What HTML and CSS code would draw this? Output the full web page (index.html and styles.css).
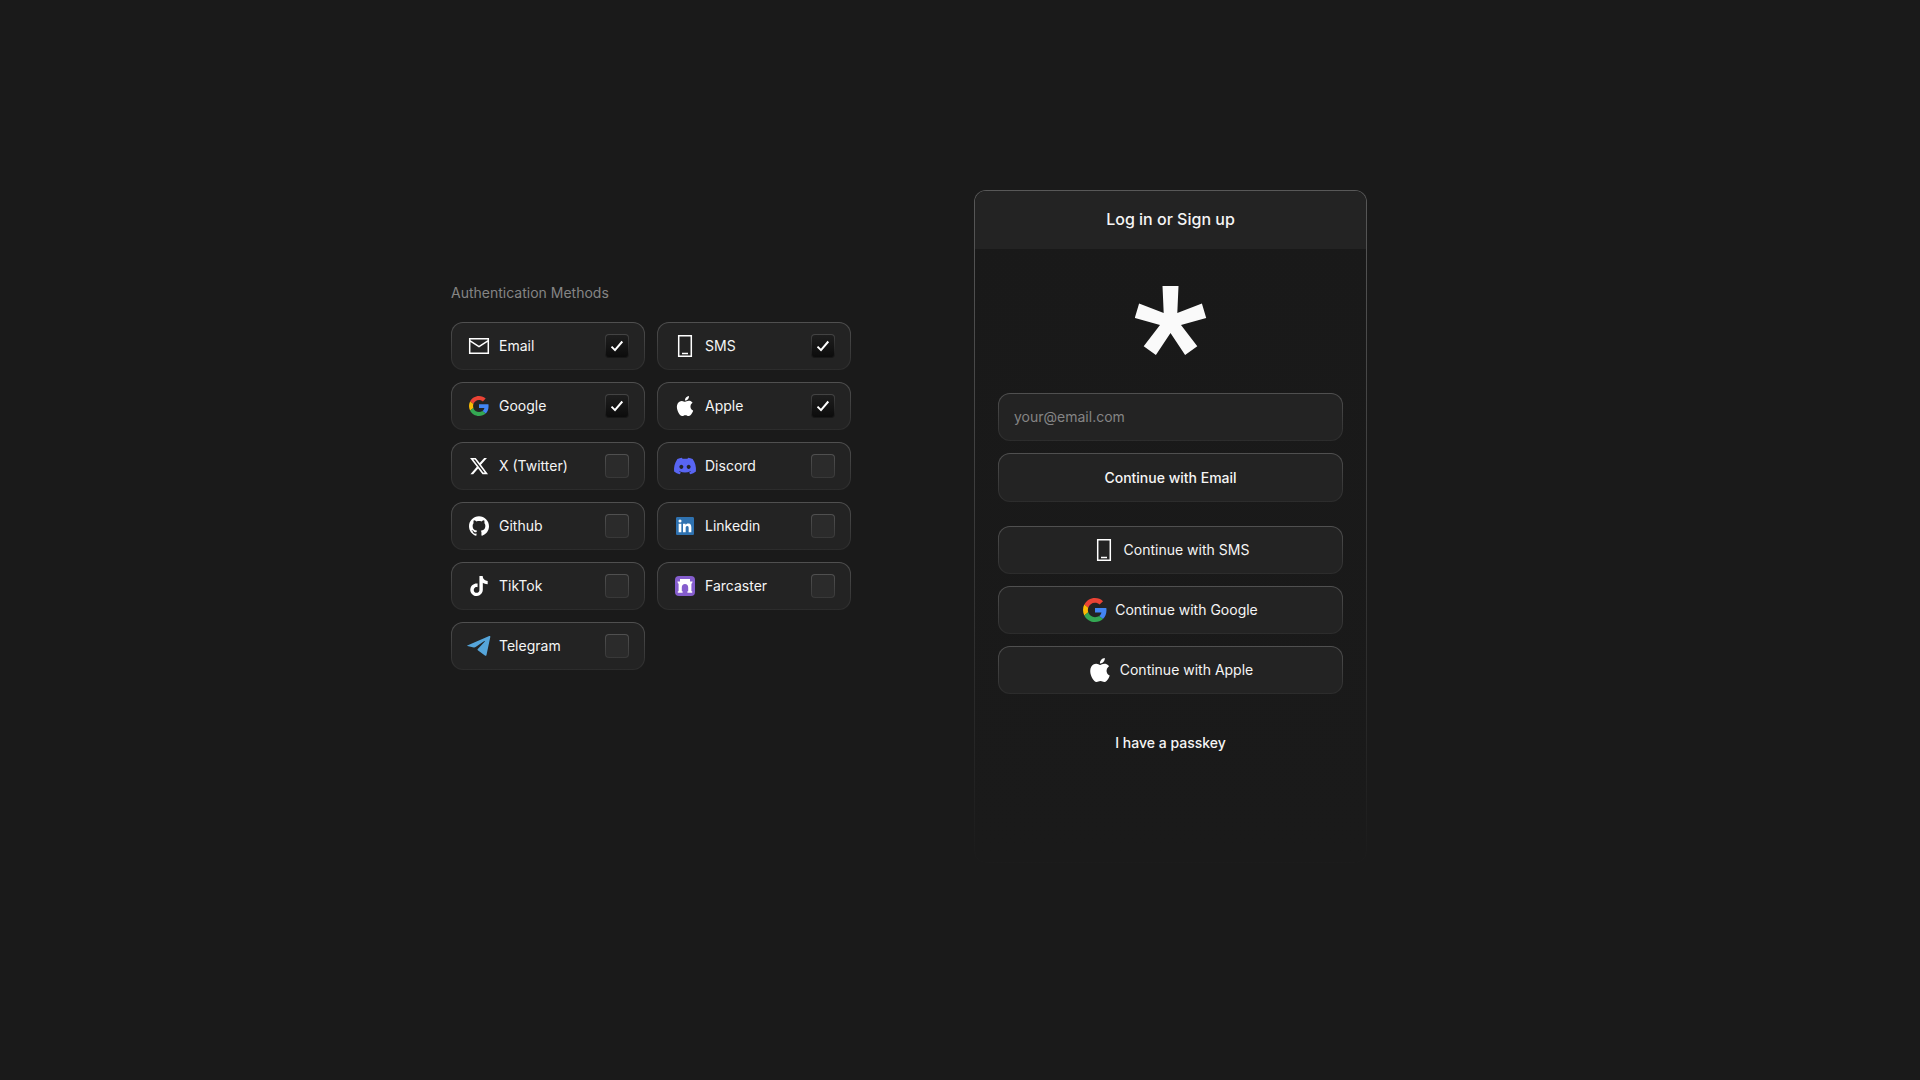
FILE: index.html
```html
<!DOCTYPE html>
<html lang="en">
<head>
    <meta charset="UTF-8">
    <meta name="viewport" content="width=device-width, initial-scale=1.0">
    <title>Log in or Sign up</title>
    <link rel="stylesheet" href="styles.css">
</head>
<body>

    <!-- Shared icons -->
    <svg class="sprite" aria-hidden="true">
        <symbol id="icon-phone" viewBox="0 0 24 24">
            <path d="M5.700 1.700h12.600v20.600H5.700z" fill="none" stroke="#fff" stroke-width="1.500"/>
            <path d="M9 19.500h6" stroke="#fff" stroke-width="1.500"/>
        </symbol>
        <symbol id="icon-google" viewBox="0 0 48 48">
            <path fill="#EA4335" d="M24 9.5c3.54 0 6.71 1.22 9.21 3.6l6.85-6.85C35.9 2.38 30.47 0 24 0 14.62 0 6.51 5.38 2.56 13.22l7.98 6.19C12.43 13.72 17.74 9.5 24 9.5z"/>
            <path fill="#4285F4" d="M46.98 24.55c0-1.57-.15-3.09-.38-4.55H24v9.02h12.94c-.58 2.96-2.26 5.48-4.78 7.18l7.73 6c4.51-4.18 7.09-10.36 7.09-17.65z"/>
            <path fill="#FBBC05" d="M10.53 28.59c-.48-1.45-.76-2.99-.76-4.59s.27-3.14.76-4.59l-7.98-6.19C.92 16.46 0 20.12 0 24c0 3.88.92 7.54 2.56 10.78l7.97-6.19z"/>
            <path fill="#34A853" d="M24 48c6.48 0 11.93-2.13 15.89-5.81l-7.73-6c-2.15 1.45-4.92 2.3-8.16 2.3-6.26 0-11.57-4.22-13.47-9.91l-7.98 6.19C6.51 42.62 14.62 48 24 48z"/>
        </symbol>
        <symbol id="icon-apple" viewBox="0 0 24 24">
            <path fill="#fff" d="M12.152 6.896c-.948 0-2.415-1.078-3.96-1.04-2.04.027-3.91 1.183-4.961 3.014-2.117 3.675-.546 9.103 1.519 12.09 1.013 1.454 2.208 3.09 3.792 3.039 1.52-.065 2.09-.987 3.935-.987 1.831 0 2.35.987 3.96.948 1.637-.026 2.676-1.48 3.676-2.948 1.156-1.688 1.636-3.325 1.662-3.415-.039-.013-3.182-1.221-3.22-4.857-.026-3.04 2.48-4.494 2.597-4.559-1.429-2.09-3.623-2.324-4.39-2.376-2-.156-3.675 1.09-4.61 1.09zM15.53 3.83c.843-1.012 1.4-2.427 1.245-3.83-1.207.052-2.662.805-3.532 1.818-.78.896-1.454 2.338-1.273 3.714 1.338.104 2.715-.688 3.559-1.701"/>
        </symbol>
    </svg>

    <main class="page">
        <section class="methods">
            <h2>Authentication Methods</h2>
            <div class="methods-grid">
                <label class="method">
                    <svg class="icon" viewBox="0 0 24 24"><path d="M2.7 4.7h18.6v14.6H2.7zM2.7 6.6 12 12.6l9.3-6" fill="none" stroke="#fff" stroke-width="1.5"/></svg>
                    <span>Email</span>
                    <input type="checkbox" checked>
                </label>
                <label class="method">
                    <svg class="icon"><use href="#icon-phone"/></svg>
                    <span>SMS</span>
                    <input type="checkbox" checked>
                </label>
                <label class="method">
                    <svg class="icon small"><use href="#icon-google"/></svg>
                    <span>Google</span>
                    <input type="checkbox" checked>
                </label>
                <label class="method">
                    <svg class="icon small"><use href="#icon-apple"/></svg>
                    <span>Apple</span>
                    <input type="checkbox" checked>
                </label>
                <label class="method">
                    <svg class="icon small" viewBox="0 0 24 24"><path fill="#fff" d="M18.244 2.25h3.308l-7.227 8.26 8.502 11.24H16.17l-5.214-6.817L4.99 21.75H1.680l7.730-8.835L1.254 2.250H8.080l4.713 6.231zm-1.161 17.520h1.833L7.084 4.126H5.117z"/></svg>
                    <span>X (Twitter)</span>
                    <input type="checkbox">
                </label>
                <label class="method">
                    <svg class="icon" viewBox="-5.8 -21.2 138.7 138.7"><path fill="#5865F2" d="M107.7 8.07A105.15 105.15 0 0 0 81.47 0a72.06 72.06 0 0 0-3.36 6.83 97.68 97.68 0 0 0-29.11 0A72.37 72.37 0 0 0 45.64 0a105.89 105.89 0 0 0-26.25 8.09C2.79 32.65-1.71 56.6.54 80.21a105.73 105.73 0 0 0 32.17 16.15 77.7 77.7 0 0 0 6.89-11.11 68.42 68.42 0 0 1-10.85-5.18c.91-.66 1.8-1.34 2.66-2a75.57 75.57 0 0 0 64.32 0c.87.71 1.76 1.39 2.66 2a68.68 68.68 0 0 1-10.87 5.19 77 77 0 0 0 6.89 11.1 105.25 105.25 0 0 0 32.19-16.14c2.64-27.38-4.51-51.11-18.9-72.15zM42.45 65.69C36.18 65.69 31 60 31 53s5-12.74 11.43-12.74S54 46 53.89 53s-5.05 12.69-11.44 12.69zm42.24 0C78.41 65.69 73.25 60 73.25 53s5-12.74 11.44-12.74S96.23 46 96.12 53s-5.04 12.69-11.43 12.69z"/></svg>
                    <span>Discord</span>
                    <input type="checkbox">
                </label>
                <label class="method">
                    <svg class="icon small" viewBox="0 0 24 24"><path fill="#fff" d="M12 .297c-6.63 0-12 5.373-12 12 0 5.303 3.438 9.8 8.205 11.385.6.113.82-.258.82-.577 0-.285-.01-1.04-.015-2.04-3.338.724-4.042-1.61-4.042-1.61C4.422 18.07 3.633 17.7 3.633 17.7c-1.087-.744.084-.729.084-.729 1.205.084 1.838 1.236 1.838 1.236 1.07 1.835 2.809 1.305 3.495.998.108-.776.417-1.305.76-1.605-2.665-.3-5.466-1.332-5.466-5.93 0-1.31.465-2.38 1.235-3.22-.135-.303-.54-1.523.105-3.176 0 0 1.005-.322 3.3 1.23.96-.267 1.98-.399 3-.405 1.02.006 2.04.138 3 .405 2.28-1.552 3.285-1.23 3.285-1.23.645 1.653.24 2.873.12 3.176.765.84 1.23 1.91 1.23 3.22 0 4.61-2.805 5.625-5.475 5.92.42.36.81 1.096.81 2.22 0 1.606-.015 2.896-.015 3.286 0 .315.21.69.825.57C20.565 22.092 24 17.592 24 12.297c0-6.627-5.373-12-12-12"/></svg>
                    <span>Github</span>
                    <input type="checkbox">
                </label>
                <label class="method">
                    <svg class="icon" viewBox="-4 -4 32 32"><path fill="#fff" d="M2 2h20v20H2z"/><path fill="#2F72B0" d="M20.447 20.452h-3.554v-5.569c0-1.328-.027-3.037-1.852-3.037-1.853 0-2.136 1.445-2.136 2.939v5.667H9.351V9h3.414v1.561h.046c.477-.9 1.637-1.85 3.37-1.85 3.601 0 4.267 2.37 4.267 5.455v6.286zM5.337 7.433a2.062 2.062 0 0 1-2.063-2.065 2.064 2.064 0 1 1 2.063 2.065zm1.782 13.019H3.555V9h3.564v11.452zM22.225 0H1.771C.792 0 0 .774 0 1.729v20.542C0 23.227.792 24 1.771 24h20.451C23.2 24 24 23.227 24 22.271V1.729C24 .774 23.2 0 22.222 0h.003z"/></svg>
                    <span>Linkedin</span>
                    <input type="checkbox">
                </label>
                <label class="method">
                    <svg class="icon small" viewBox="0 0 24 24"><path fill="#fff" d="M12.525.02c1.31-.02 2.61-.01 3.91-.02.08 1.53.63 3.09 1.75 4.17 1.12 1.11 2.7 1.62 4.24 1.79v4.03c-1.44-.05-2.89-.35-4.2-.97-.57-.26-1.1-.59-1.62-.93-.01 2.92.01 5.84-.02 8.75-.08 1.4-.54 2.79-1.35 3.94-1.31 1.92-3.58 3.17-5.91 3.21-1.43.08-2.86-.31-4.08-1.03-2.02-1.19-3.44-3.37-3.65-5.71-.02-.5-.03-1-.01-1.49.18-1.9 1.12-3.72 2.58-4.96 1.66-1.44 3.98-2.13 6.15-1.72.02 1.48-.04 2.96-.04 4.44-.99-.32-2.15-.23-3.02.37-.63.41-1.11 1.04-1.36 1.75-.21.51-.15 1.07-.14 1.61.24 1.64 1.82 3.02 3.5 2.87 1.12-.01 2.19-.66 2.77-1.61.19-.33.4-.67.41-1.06.1-1.79.06-3.57.07-5.36.01-4.03-.01-8.05.02-12.07z"/></svg>
                    <span>TikTok</span>
                    <input type="checkbox">
                </label>
                <label class="method">
                    <svg class="icon small" viewBox="0 0 20 20"><rect width="20" height="20" rx="4" fill="#855DCD"/><path fill="#fff" d="M5 3h10v2.400h2.600l-.6 2h-.6v7.800h.8v1.600H12.400v-1.600h.8v-3.600c0-2.200-1.200-3.600-3.200-3.600s-3.200 1.400-3.200 3.600v3.600h.8v1.600H2.800v-1.600h.8V7.400H3l-.6-2H5z"/></svg>
                    <span>Farcaster</span>
                    <input type="checkbox">
                </label>
                <label class="method">
                    <svg class="icon" viewBox="0 0 24 24"><path fill="#55A5DA" d="M.3 11.5 22.2 2.1c.8-.3 1.3.1 1.1 1l-3.8 17.8c-.2.9-.9 1.1-1.6.6l-7.1-5.2c-.5-.4-.5-.9 0-1.4l7-7.5c.2-.3-.1-.5-.4-.3l-8.800 6c-.6.4-1.200.5-1.900.3L.4 12.100c-.4-.1-.4-.4-.1-.6z"/></svg>
                    <span>Telegram</span>
                    <input type="checkbox">
                </label>
            </div>
        </section>

        <section class="login">
            <header class="login-header">
                <h1>Log in or Sign up</h1>
            </header>
            <form class="login-form">
                <svg class="logo" viewBox="0 0 72 70" role="img" aria-label="Logo">
                    <path fill="#fafafa" d="M27.500 0h16l-1.200 27L66.900 17.600 71.200 32 46 39 62.300 60.200 50.100 69 35.500 47 20.900 69 8.700 60.200 25 39-.2 32 4.100 17.600 28.700 27z"/>
                </svg>
                <input class="field" type="email" placeholder="your@email.com" aria-label="Email address">
                <button class="btn primary" type="submit">Continue with Email</button>
                <div class="providers">
                    <button class="btn" type="button"><svg class="icon"><use href="#icon-phone"/></svg>Continue with SMS</button>
                    <button class="btn" type="button"><svg class="icon"><use href="#icon-google"/></svg>Continue with Google</button>
                    <button class="btn" type="button"><svg class="icon"><use href="#icon-apple"/></svg>Continue with Apple</button>
                </div>
                <button class="passkey" type="button">I have a passkey</button>
            </form>
        </section>
    </main>

</body>
</html>
```

FILE: styles.css
```css
* {
    box-sizing: border-box;
}
body {
    margin: 0;
    min-height: 100vh;
    background-color: #1a1a1a;
    color: #f5f5f5;
    font-family: Inter, "Liberation Sans", sans-serif;
    font-size: 14px;
    line-height: 20px;
}
h1, h2 {
    margin: 0;
}
button, input {
    font: inherit;
    color: inherit;
}
.sprite {
    display: none;
}
.page {
    display: flex;
    flex-wrap: wrap;
    justify-content: center;
    align-items: flex-start;
    gap: 48px 123px;
    padding: 190px 102px 48px 0;
}

/* Authentication methods */
.methods {
    width: 400px;
    padding-top: 93px;
}
.methods h2 {
    margin-bottom: 19px;
    color: #858585;
    font-size: 14px;
    font-weight: 400;
}
.methods-grid {
    display: grid;
    grid-template-columns: 1fr 1fr;
    gap: 12px;
}
/* Gradient border: the fill stops at the padding box, the lighter edge shows around it */
.method, .field, .btn {
    height: 48px;
    border: 1px solid transparent;
    border-radius: 12px;
    background: linear-gradient(#232323, #232323) padding-box, linear-gradient(#505050, #2c2c2c) border-box;
}
.method {
    display: flex;
    align-items: center;
    gap: 8px;
    padding: 0 15px;
    cursor: pointer;
}
.method span {
    flex: 1;
}
.icon {
    flex: none;
    width: 24px;
    height: 24px;
}
.icon.small {
    padding: 2px;
}
.method input {
    appearance: none;
    width: 24px;
    height: 24px;
    margin: 0;
    border: 1px solid transparent;
    border-radius: 4px;
    background: linear-gradient(#2b2b2b, #2b2b2b) padding-box, linear-gradient(#505050, #383838) border-box;
    cursor: pointer;
}
.method input:checked {
    background: url("data:image/svg+xml,%3Csvg xmlns='http://www.w3.org/2000/svg' viewBox='0 0 22 22'%3E%3Cpath d='M5.500 11.600l3.500 3.500 7.300-8.600' fill='none' stroke='%23fff' stroke-width='2'/%3E%3C/svg%3E") padding-box, linear-gradient(#1e1e1e, #0c0c0c) padding-box, linear-gradient(#444, #161616) border-box;
}

/* Login panel */
.login {
    width: 393px;
    min-height: 673px;
    border: 1px solid transparent;
    border-radius: 12px;
    overflow: hidden;
    background: linear-gradient(#191919, #1a1a1a) padding-box, linear-gradient(#585858, #1b1b1b) border-box;
}
.login-header {
    padding: 18px 0 20px;
    background-color: #232323;
    text-align: center;
}
.login-header h1 {
    font-size: 16px;
    font-weight: 500;
    line-height: 20px;
}
.login-form {
    display: flex;
    flex-direction: column;
    gap: 12px;
    padding: 37px 23px;
}
.logo {
    width: 72px;
    height: 70px;
    margin: 0 auto 25px;
}
.field {
    width: 100%;
    padding: 0 15px 2px;
    outline: none;
}
.field::placeholder {
    color: #858585;
    opacity: 1;
}
.btn {
    display: flex;
    justify-content: center;
    align-items: center;
    gap: 8px;
    cursor: pointer;
}
.primary {
    height: 49px;
    font-weight: 500;
}
.providers {
    display: flex;
    flex-direction: column;
    gap: 12px;
    margin-top: 12px;
}
.passkey {
    margin: 27px auto 0;
    padding: 0;
    border: 0;
    background: none;
    font-weight: 500;
    cursor: pointer;
}
```
